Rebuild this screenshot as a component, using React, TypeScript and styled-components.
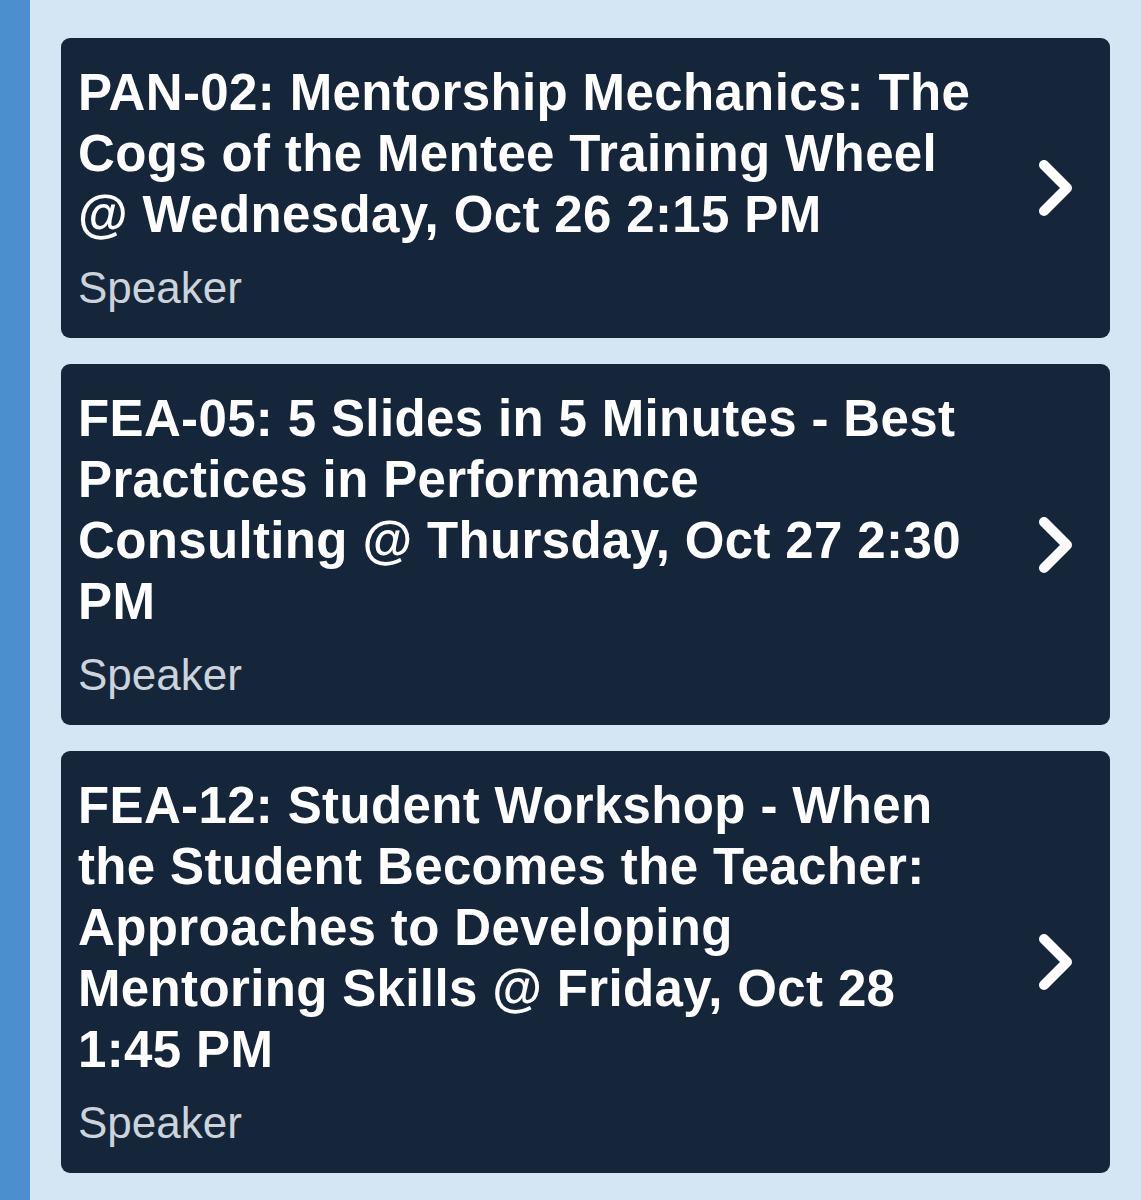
import * as React from 'react';
import styled, { createGlobalStyle } from 'styled-components';

const GlobalStyle = createGlobalStyle`
  html, body {
    margin: 0;
    padding: 0;
    background: #d4e5f3;
  }
  body {
    font-family: "Liberation Sans", Arial, Helvetica, sans-serif;
  }
`;

const Page = styled.div`
  display: flex;
  min-height: 1200px;
  background: #d4e5f3;
`;

const SideStripe = styled.div`
  width: 30px;
  flex: none;
  background: #4b8fce;
`;

const List = styled.div`
  flex: 1;
  display: flex;
  flex-direction: column;
  gap: 26px;
  padding: 38px 31px 0 31px;
`;

const Card = styled.a`
  display: flex;
  align-items: center;
  gap: 61px;
  padding: 24px 36px 24px 17px;
  background: #15263a;
  border-radius: 9px;
  text-decoration: none;
  cursor: pointer;
`;

const Body = styled.div`
  flex: 1;
  min-width: 0;
  display: flex;
  flex-direction: column;
  gap: 16px;
`;

const Title = styled.div`
  color: #ffffff;
  font-weight: 700;
  font-size: 51px;
  line-height: 61px;
  letter-spacing: 0.36px;
`;

const Role = styled.div`
  color: #cdd3da;
  font-size: 44px;
  line-height: 53px;
`;

const Chevron = styled.svg`
  width: 37px;
  height: 60px;
  flex: none;
`;

interface Session {
  title: string;
  role: string;
}

const sessions: Session[] = [
  {
    title: 'PAN-02: Mentorship Mechanics: The Cogs of the Mentee Training Wheel @ Wednesday, Oct 26 2:15 PM',
    role: 'Speaker',
  },
  {
    title: 'FEA-05: 5 Slides in 5 Minutes - Best Practices in Performance Consulting @ Thursday, Oct 27 2:30 PM',
    role: 'Speaker',
  },
  {
    title:
      'FEA-12: Student Workshop - When the Student Becomes the Teacher: Approaches to Developing Mentoring Skills @ Friday, Oct 28 1:45 PM',
    role: 'Speaker',
  },
];

const ChevronRight = () => (
  <Chevron viewBox="0 0 37 60" fill="none">
    <path
      d="M7 7 L30 30 L7 53"
      stroke="#ffffff"
      strokeWidth="10"
      strokeLinecap="round"
      strokeLinejoin="round"
    />
  </Chevron>
);

const App: React.FC = () => (
  <>
    <GlobalStyle />
    <Page>
      <SideStripe />
      <List>
        {sessions.map((s) => (
          <Card key={s.title}>
            <Body>
              <Title>{s.title}</Title>
              <Role>{s.role}</Role>
            </Body>
            <ChevronRight />
          </Card>
        ))}
      </List>
    </Page>
  </>
);

export default App;
